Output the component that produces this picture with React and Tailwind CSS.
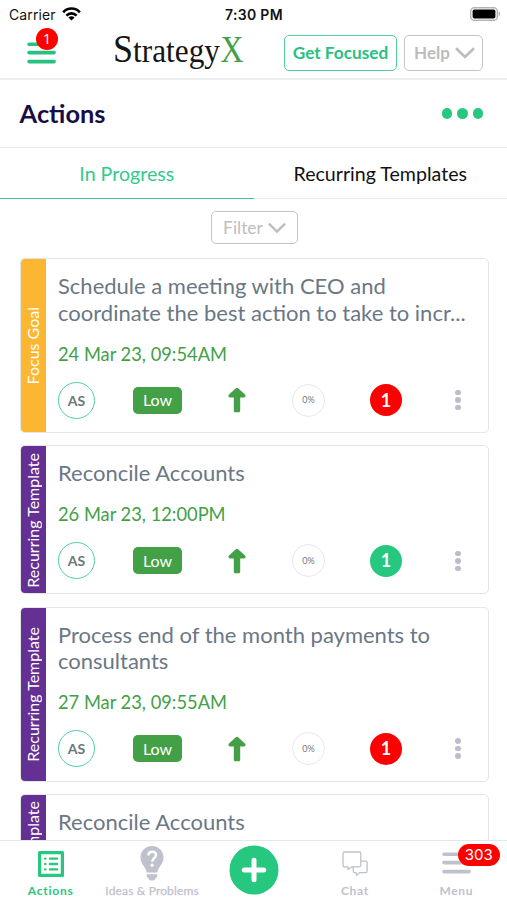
import React from 'react';
import clsx from 'clsx';

const cards = [
  {
    type: 'focus',
    label: 'Focus Goal',
    title: ['Schedule a meeting with CEO and', 'coordinate the best action to take to incr...'],
    date: '24 Mar 23, 09:54AM',
    alert: true,
  },
  {
    type: 'recurring',
    label: 'Recurring Template',
    title: ['Reconcile Accounts'],
    date: '26 Mar 23, 12:00PM',
    alert: false,
  },
  {
    type: 'recurring',
    label: 'Recurring Template',
    title: ['Process end of the month payments to', 'consultants'],
    date: '27 Mar 23, 09:55AM',
    alert: true,
  },
  {
    type: 'recurring',
    label: 'Recurring Template',
    title: ['Reconcile Accounts'],
  },
];

const Chevron = ({ className }) => (
  <svg className={className} viewBox="0 0 20 12" fill="none" stroke="currentColor" strokeWidth="2.6">
    <path d="M1 1.2 10 10 19 1.2" />
  </svg>
);

const Lines = () => (
  <svg className="h-[23px] w-[29px]" viewBox="0 0 29 23" stroke="currentColor" strokeWidth="3.6" strokeLinecap="round">
    <path d="M2 3.2H27.1M2 11.6H27.1M2 20.6H27.1" />
  </svg>
);

const StatusBar = () => (
  <div className="grid h-7 shrink-0 grid-cols-[1fr_auto_1fr] items-center pr-[6px] pl-[9px] font-['Inter',sans-serif] text-[14px] text-[#111]">
    <div className="flex items-center gap-1.5">
      <span className="tracking-[0.1px]">Carrier</span>
      <svg className="h-[14px] w-[19px]" viewBox="0 0 19 14" fill="none" stroke="#000" strokeWidth="2.6">
        <path d="M1.2 5.3C5.7.3 13.3.3 17.8 5.3" />
        <path d="M4.4 8.6C7.2 5.6 11.8 5.6 14.6 8.6" />
        <path d="M9.5 13.6 6.4 10.5C8.2 8.9 10.8 8.9 12.6 10.5Z" fill="#000" stroke="none" />
      </svg>
    </div>
    <div className="mr-[2px] text-center font-semibold tracking-[0.3px]">7:30 PM</div>
    <svg className="h-[14px] w-[31px] justify-self-end" viewBox="0 0 31 14">
      <rect x=".7" y=".7" width="26.6" height="12.6" rx="3.6" fill="#fff" stroke="#b5b5b5" strokeWidth="1.4" />
      <rect x="2.6" y="2.4" width="22.8" height="9.2" rx="1.8" fill="#000" />
      <path d="M28.6 4.6C30.6 5.2 30.6 8.8 28.6 9.4Z" fill="#b5b5b5" />
    </svg>
  </div>
);

const Header = () => (
  <header className="flex h-[52px] shrink-0 items-center border-b-2 border-[#eeeeee] pl-[27px]">
    <div className="relative mb-[2px] text-[#26c281]">
      <Lines />
      <span className="absolute -top-[13px] left-[9px] flex size-[22px] items-center justify-center rounded-full bg-[#fe0000] font-['Open_Sans',sans-serif] text-[15px] text-white">
        1
      </span>
    </div>
    <svg className="ml-[57px] h-[44px] w-[132px] overflow-visible" viewBox="0 0 132 44" fontFamily="Liberation Serif, serif" fill="#151515">
      <text x="0" y="31" fontSize="41" textLength="20" lengthAdjust="spacingAndGlyphs">S</text>
      <text x="20" y="31" fontSize="33" textLength="87" lengthAdjust="spacingAndGlyphs">trategy</text>
      <text x="107.5" y="31" fontSize="37" textLength="23" lengthAdjust="spacingAndGlyphs" fill="#43a047">X</text>
    </svg>
    <button className="ml-[39px] h-9 w-[113px] rounded-[5px] border-[1.5px] border-[#4fd09b] text-[17.2px] font-bold whitespace-nowrap text-[#26c281]">
      Get Focused
    </button>
    <button className="ml-[7px] flex h-9 w-[79px] items-center justify-center gap-[5px] rounded-[5px] border-[1.5px] border-[#c4c4c4] pl-[2px] text-[17px] font-bold text-[#bcbcbc]">
      Help
      <Chevron className="h-3 w-5" />
    </button>
  </header>
);

const Card = ({ card }) => (
  <article className="flex min-h-[149px] w-[469px] shrink-0 overflow-hidden rounded-[5px] border-[1.5px] border-[#e3e5e7]">
    <div
      className={clsx(
        '-my-0.5 -ml-0.5 flex w-[27px] shrink-0 items-center justify-center',
        card.type === 'focus' ? 'bg-[#fdb632]' : 'bg-[#653093]'
      )}
    >
      <span className="rotate-180 text-[16px] leading-none whitespace-nowrap text-white [writing-mode:vertical-rl]">
        {card.label}
      </span>
    </div>
    <div className="min-w-0 pt-[14px] pb-[13.3px] pl-3">
      <h2 className="text-[22px] leading-[26.5px] text-[#6b7785]">
        {card.title.map((line) => (
          <span key={line} className="block whitespace-nowrap">{line}</span>
        ))}
      </h2>
      {card.date && (
        <>
          <p className="mt-[15.5px] text-[18.3px] leading-[24px] whitespace-nowrap text-[#43a047]">{card.date}</p>
          <div className="mt-[15.5px] flex h-[38px] items-center">
            <span className="flex size-[37px] shrink-0 items-center justify-center rounded-full border-[1.5px] border-[#4fd0a0] text-[14px] font-bold text-[#6c7580]">
              AS
            </span>
            <span className="ml-[38px] flex h-[27px] w-[49px] shrink-0 items-center justify-center rounded-[5px] bg-[#43a047] text-[16px] text-white">
              Low
            </span>
            <svg className="ml-[46px] h-[26px] w-[18px] shrink-0" viewBox="0 0 18 26" fill="#43a047">
              <path d="M9 .8C9.6.8 10 1 10.4 1.4L17 7.4C18.1 8.6 17.5 10.4 16 10.4H12.2V23.4C12.2 24.7 11.6 25.2 10.5 25.2H7.5C6.4 25.2 5.8 24.7 5.8 23.4V10.4H2C.5 10.4-.1 8.6 1 7.4L7.6 1.4C8 1 8.4.8 9 .8Z" />
            </svg>
            <span className="ml-[46px] flex size-[33px] shrink-0 items-center justify-center rounded-full border-[1.5px] border-[#e6e8e8] text-[9px] text-[#777]">
              0%
            </span>
            <span
              className={clsx(
                'ml-[45px] flex size-8 shrink-0 items-center justify-center rounded-full text-[18px] font-bold text-white',
                card.alert ? 'bg-[#fe0000]' : 'bg-[#26c77e]'
              )}
            >
              1
            </span>
            <span className="ml-[53px] flex flex-col gap-[2px]">
              <i className="size-[5.6px] rounded-full bg-[#bbbdcb]" />
              <i className="size-[5.6px] rounded-full bg-[#bbbdcb]" />
              <i className="size-[5.6px] rounded-full bg-[#bbbdcb]" />
            </span>
          </div>
        </>
      )}
    </div>
  </article>
);

const NavItem = ({ label, active, children }) => (
  <div
    className={clsx(
      'flex flex-col items-center text-[12px] font-bold',
      active ? 'text-[#26c77e]' : 'text-[#bfc1cd]'
    )}
  >
    <div className="flex h-[42px] items-center pt-[3px]">{children}</div>
    <span className="leading-[16px] whitespace-nowrap">{label}</span>
  </div>
);

const BottomNav = () => (
  <nav className="grid h-[60px] shrink-0 grid-cols-5 border-t-[1.5px] border-[#e6e7e8] bg-white">
    <NavItem label={<span className="tracking-[0.8px]">Actions</span>} active>
      <svg className="size-[26px]" viewBox="0 0 26 26" fill="currentColor">
        <path fillRule="evenodd" d="M1.5 0h23A1.5 1.5 0 0 1 26 1.5v23a1.5 1.5 0 0 1-1.5 1.5h-23A1.5 1.5 0 0 1 0 24.5v-23A1.5 1.5 0 0 1 1.5 0ZM3.2 3.2v19.6h19.6V3.2Z" />
        <g stroke="currentColor" strokeWidth="2.4" strokeLinecap="round">
          <path d="M7.2 7.6h.2M7.2 13h.2M7.2 18.4h.2M12 7.600h7M12 13h7M12 18.400h7" />
        </g>
      </svg>
    </NavItem>
    <NavItem label={<span className="font-normal tracking-[0.15px] [-webkit-text-stroke:0.25px]">Ideas &amp; Problems</span>}>
      <svg className="h-[35px] w-[24px]" viewBox="0 0 24 35" fill="currentColor">
        <path d="M12 0C5.2 0 .5 5.2.5 11.5c0 4 1.8 6.5 3.7 9.2 1.3 1.9 2.2 3.8 2.5 5.8h10.6c.3-2 1.2-3.9 2.5-5.8 1.9-2.7 3.7-5.2 3.7-9.2C23.5 5.2 18.8 0 12 0ZM6.8 28.2h10.4v2c0 .9-.6 1.5-1.5 1.7-.5 1.9-1.7 2.7-3.7 2.7s-3.2-.8-3.7-2.7c-.9-.2-1.5-.8-1.5-1.7Z" />
        <path d="M8.3 9.4c.2-2.5 1.7-3.7 3.8-3.7 2.3 0 3.9 1.3 3.9 3.4 0 3.2-3.8 3.2-3.8 6.6" fill="none" stroke="#fff" strokeWidth="2.5" />
        <circle cx="12.1" cy="19.2" r="1.6" fill="#fff" />
      </svg>
    </NavItem>
    <div className="flex justify-center pt-1 pl-px">
      <svg className="size-[50px]" viewBox="0 0 50 50">
        <circle cx="25" cy="25" r="24.5" fill="#26c77e" />
        <path d="M25 15.3v19.4M15.3 25h19.4" stroke="#fff" strokeWidth="5" strokeLinecap="round" />
      </svg>
    </div>
    <NavItem label={<span className="tracking-[0.7px]">Chat</span>}>
      <svg className="h-[25px] w-[26px]" viewBox="0 0 26 25" fill="none" stroke="currentColor" strokeWidth="1.3" strokeLinejoin="round">
        <path d="M2.5 1h14.8c1 0 1.5.6 1.5 1.5v11.8c0 1-.5 1.5-1.5 1.5H10l-4 2.7v-2.7H2.5c-1 0-1.5-.5-1.5-1.5V2.5C1 1.6 1.5 1 2.5 1Z" />
        <path d="M18.8 10.2h4.9c.9 0 1.4.5 1.4 1.4v8.6c0 .9-.5 1.4-1.4 1.4h-6.2l-2.7 2.7-.8-2.7h-1.4c-.9 0-1.4-.5-1.4-1.4v-4.4" />
      </svg>
    </NavItem>
    <NavItem label={<span className="tracking-[0.6px]">Menu</span>}>
      <div className="relative mb-[2px]">
        <Lines />
        <span className="absolute -top-[7px] left-[16px] flex h-[22px] w-[42px] items-center justify-center rounded-full bg-[#fe0000] font-['Inter',sans-serif] text-[15px] font-normal text-white">
          303
        </span>
      </div>
    </NavItem>
  </nav>
);

const App = () => (
  <div className="flex h-[900px] w-[507px] flex-col overflow-hidden bg-white font-['Lato',sans-serif]">
    <StatusBar />
    <Header />
    <div className="flex h-[68px] shrink-0 items-center justify-between border-b border-[#e4eaea] pr-[24px] pl-[19.6px]">
      <h1 className="text-[25.4px] font-bold text-[#170f45]">Actions</h1>
      <div className="flex gap-[5px]">
        <i className="size-[10.5px] rounded-full bg-[#26c77e]" />
        <i className="size-[10.5px] rounded-full bg-[#26c77e]" />
        <i className="size-[10.5px] rounded-full bg-[#26c77e]" />
      </div>
    </div>
    <div className="grid h-[51px] shrink-0 grid-cols-2 text-[19.6px]">
      <div className="flex items-center justify-center border-b-[1.5px] border-[#4bc193] pt-px text-[#35c98c]">In Progress</div>
      <div className="flex items-center justify-center border-b border-[#e4eaea] pt-px text-[#111]">Recurring Templates</div>
    </div>
    <div className="flex min-h-0 flex-1 flex-col overflow-hidden pt-3 pl-5">
      <button className="ml-[191px] flex h-[33px] w-[87px] shrink-0 items-center justify-center gap-[5px] rounded-[5px] border-[1.5px] border-[#c4c4c4] pt-px text-[17.4px] text-[#bdbdbd]">
        Filter
        <Chevron className="h-[12px] w-[18px]" />
      </button>
      <div className="mt-[14px] flex flex-col gap-[12.2px]">
        {cards.map((card, i) => (
          <Card key={i} card={card} />
        ))}
      </div>
    </div>
    <BottomNav />
  </div>
);

export default App;
